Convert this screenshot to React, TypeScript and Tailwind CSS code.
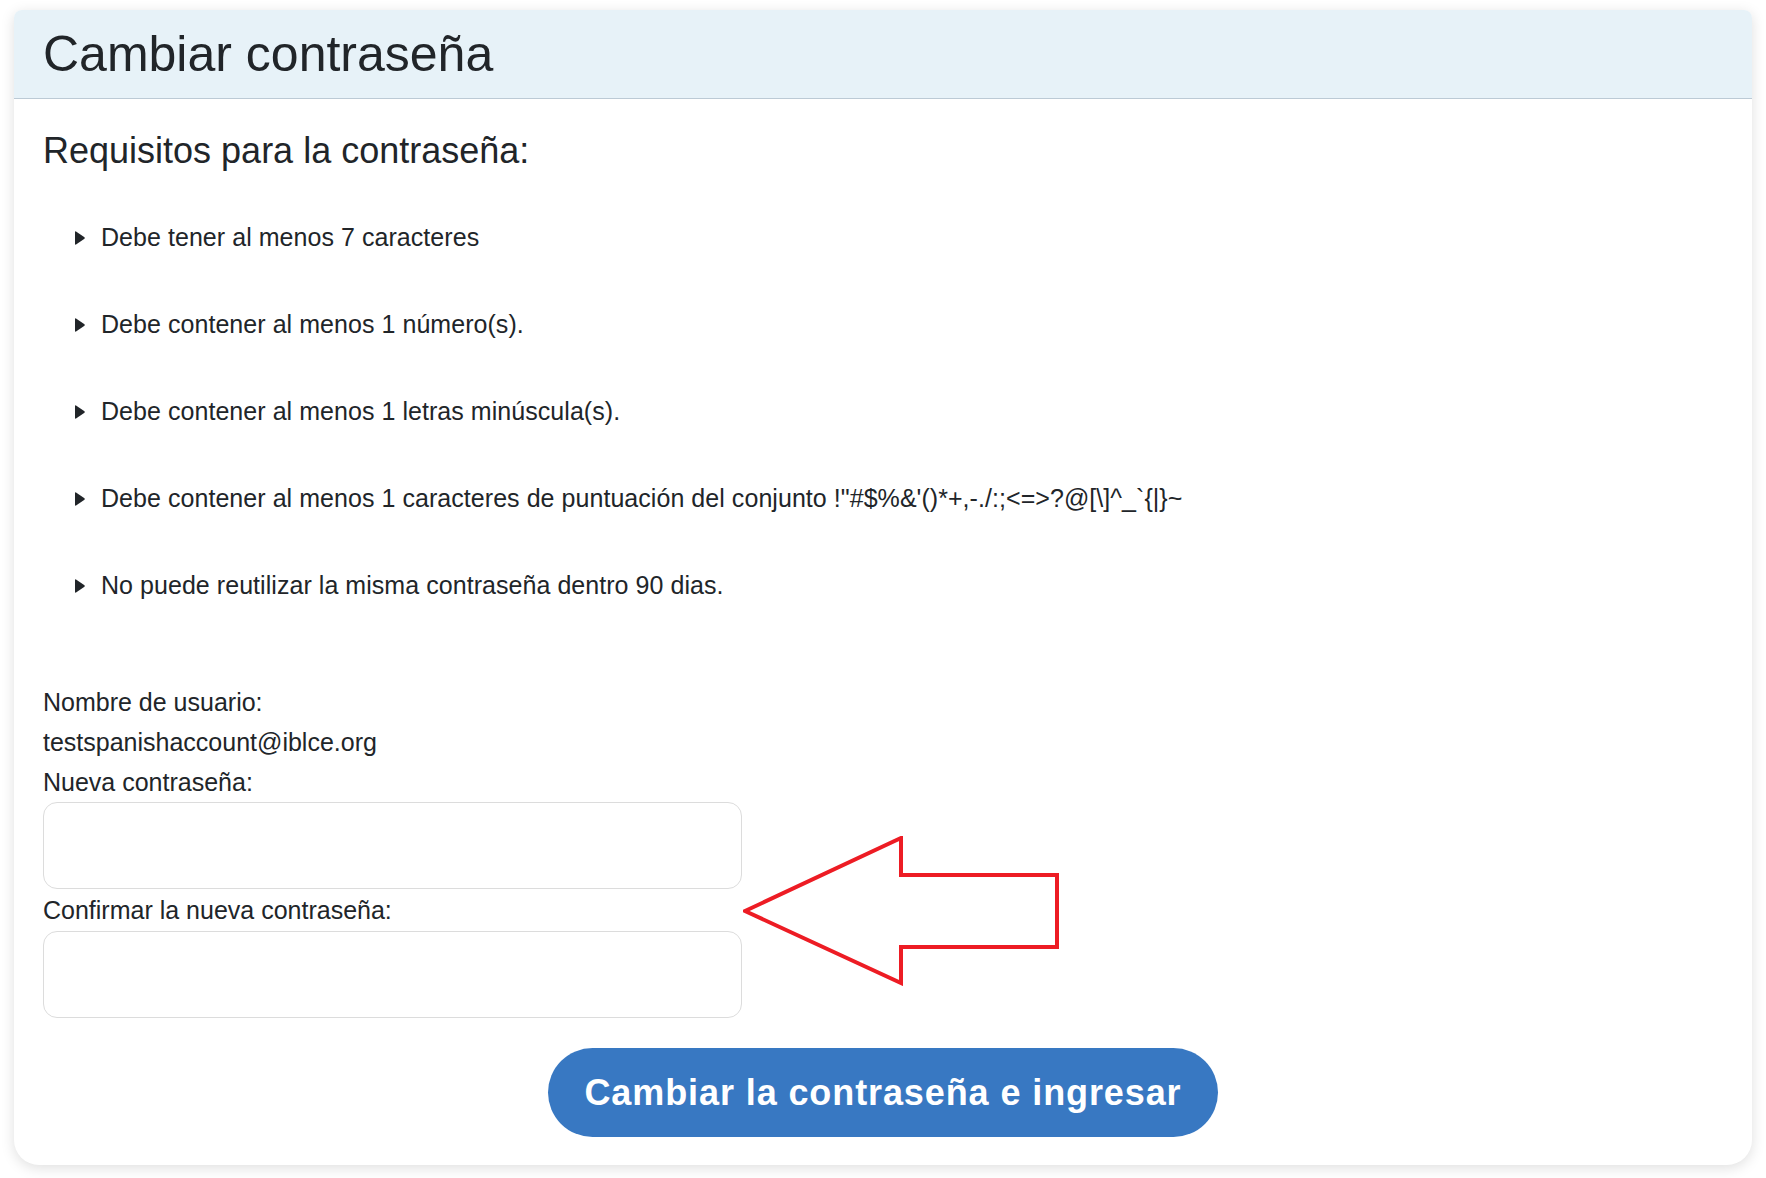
import React from "react";

const requirements = [
  "Debe tener al menos 7 caracteres",
  "Debe contener al menos 1 número(s).",
  "Debe contener al menos 1 letras minúscula(s).",
  "Debe contener al menos 1 caracteres de puntuación del conjunto !\"#$%&'()*+,-./:;<=>?@[\\]^_`{|}~",
  "No puede reutilizar la misma contraseña dentro 90 dias.",
];

export default function App() {
  return (
    <div
      className="min-h-[1178px] w-full bg-white px-[14px] pt-[10px] pb-[12px] text-[#212529]"
      style={{ fontFamily: '"Liberation Sans", Arial, sans-serif' }}
    >
      <div className="relative rounded-t-[8px] rounded-b-[25px] bg-white shadow-[0_3px_14px_rgba(0,0,0,0.13)]">
        <div className="flex h-[89px] items-center rounded-t-[8px] border-b border-[#bccad5] bg-[#e7f2f8] px-[29px]">
          <h1 className="text-[50px] leading-none font-normal">Cambiar contraseña</h1>
        </div>

        <div className="px-[29px] pt-[27px] pb-[28px]">
          <h2 className="h-[50px] text-[36px] leading-[50px] font-normal">Requisitos para la contraseña:</h2>

          <ul className="mt-[18px]">
            {requirements.map((r) => (
              <li key={r} className="flex h-[87px] items-center pl-[32px] text-[25px] tracking-[0.05px]">
                <svg width="10" height="14" viewBox="0 0 10 14" className="shrink-0">
                  <path d="M1 0.5 L9.5 6.2 Q10 7 9.5 7.8 L1 13.5 Q0 14 0 13 L0 1 Q0 0 1 0.5 Z" fill="#212529" />
                </svg>
                <span className="ml-[16px]">{r}</span>
              </li>
            ))}
          </ul>

          <div className="mt-[53px] text-[25px]">
            <div className="h-[40px] leading-[40px]">Nombre de usuario:</div>
            <div className="h-[40px] leading-[40px]">testspanishaccount@iblce.org</div>
            <div className="h-[40px] leading-[40px]">Nueva contraseña:</div>
            <input
              type="password"
              className="block h-[87px] w-[699px] rounded-[14px] border border-[#dcdcdc] bg-white px-4 outline-none"
            />
            <div className="h-[42px] leading-[42px]">Confirmar la nueva contraseña:</div>
            <input
              type="password"
              className="block h-[87px] w-[699px] rounded-[14px] border border-[#dcdcdc] bg-white px-4 outline-none"
            />
          </div>

          <div className="mt-[30px] flex justify-center">
            <button className="h-[89px] w-[670px] rounded-full bg-[#3878c2] text-[36px] font-bold tracking-[0.9px] text-white">
              Cambiar la contraseña e ingresar
            </button>
          </div>
        </div>

        <svg
          className="pointer-events-none absolute left-[729px] top-[826px]"
          width="318"
          height="150"
          viewBox="0 0 318 150"
        >
          <polygon
            points="2,75 158,2 158,39 314,39 314,111 158,111 158,147"
            fill="none"
            stroke="#ed1c24"
            strokeWidth="4"
            strokeLinejoin="miter"
          />
        </svg>
      </div>
    </div>
  );
}
